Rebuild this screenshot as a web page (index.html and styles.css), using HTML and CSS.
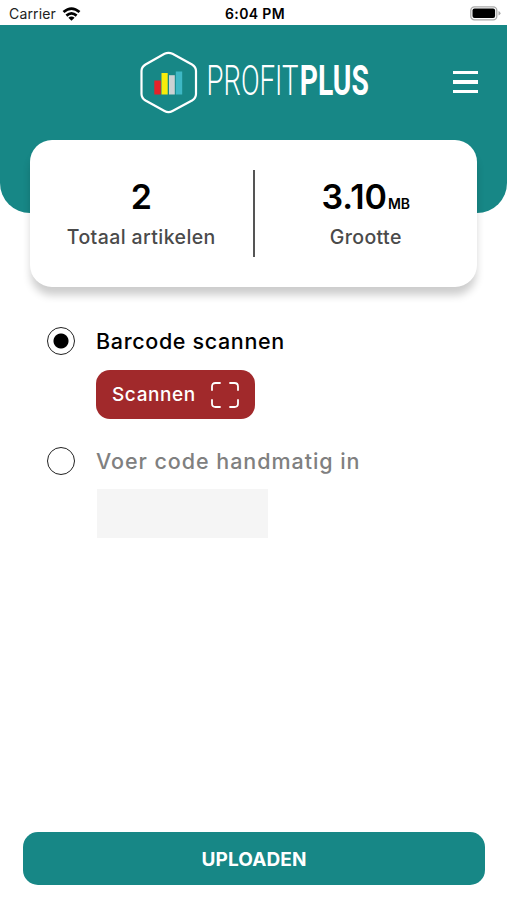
FILE: index.html
```html
<!DOCTYPE html>
<html lang="nl">
<head>
<meta charset="utf-8">
<title>ProfitPlus</title>
<link rel="stylesheet" href="styles.css">
</head>
<body>
<div class="status">
  <div class="carrier"><span>Carrier</span>
    <svg width="19" height="14" viewBox="0 0 18 14" fill="none" stroke="#000" stroke-width="2.7"><path d="M1 5.1Q9-1.9 17 5.1M3.9 8.6Q9 4.3 14.1 8.6"/><path d="M9 13.8L5.9 10.8Q9 8.4 12.1 10.8Z" fill="#000" stroke="none"/></svg>
  </div>
  <div class="time">6:04 PM</div>
  <svg class="battery" width="31" height="15" viewBox="0 0 31 15"><rect x=".8" y=".8" width="26" height="13" rx="3.6" fill="#fff" stroke="#aaa" stroke-width="1.3"/><rect x="2.5" y="2.6" width="22.6" height="9.4" rx="2"/><path d="M28.5 5q2 .8 2 2.3t-2 2.3z" fill="#aaa"/></svg>
</div>
<header class="header">
  <svg class="logo" width="236" height="66" viewBox="0 0 236 66">
    <path d="M25.500 3.800Q29.500 1.800 33.500 3.800L53 14.500Q57 17 57 21V44Q57 48 53 50.500L33.500 61Q29.500 63.200 25.500 61L6.500 50.500Q2.500 48 2.500 44V21Q2.500 17 6.500 14.500Z" fill="none" stroke="#fff" stroke-width="2.200"/>
    <path d="M15.300 30.500h6.500V44.500h-6.500z" fill="#e52229"/><path d="M22.500 23h6.200v21.500h-6.200z" fill="#f8ed0a"/><path d="M30 25.200h5.800V44.500H30z" fill="#ccd2d3"/><path d="M36.800 21.500h6.400v23h-6.400z" fill="#3eb8c5"/>
    <text class="logo-thin" x="67.500" y="45.300" textLength="92" lengthAdjust="spacingAndGlyphs">PROFIT</text>
    <text class="logo-bold" x="160.800" y="45.300" textLength="69" lengthAdjust="spacingAndGlyphs">PLUS</text>
  </svg>
  <div class="menu"><i></i><i></i><i></i></div>
</header>
<section class="card">
  <div class="stat"><div class="value">2</div><div class="label">Totaal artikelen</div></div>
  <div class="divider"></div>
  <div class="stat"><div class="value">3.10<small>MB</small></div><div class="label">Grootte</div></div>
</section>
<main class="options">
  <div class="option"><span class="radio on"></span><span class="name">Barcode scannen</span></div>
  <div class="scan"><span>Scannen</span>
    <svg width="28" height="26" viewBox="0 0 28 26" fill="none" stroke="#fff" stroke-width="1.800" stroke-linecap="round"><path d="M1 8V4.500Q1 1 4.500 1H9M19 1h4.500Q27 1 27 4.500V8M27 18v3.500q0 3.500-3.500 3.500H19M9 25H4.500Q1 25 1 21.500V18"/></svg>
  </div>
  <div class="option second"><span class="radio"></span><span class="name muted">Voer code handmatig in</span></div>
  <div class="field"></div>
</main>
<footer class="upload">UPLOADEN</footer>
</body>
</html>
```
FILE: styles.css
```css
* { box-sizing: border-box; }
body {
  margin: 0;
  width: 507px;
  height: 900px;
  display: flex;
  flex-direction: column;
  background: #fff;
  color: #000;
  font-family: Inter, "Liberation Sans", sans-serif;
  overflow: hidden;
}
svg { display: block; }
.status {
  height: 25px;
  flex: none;
  display: grid;
  grid-template-columns: 1fr auto 1fr;
  align-items: center;
  padding: 2px 6px 0 9px;
  font-size: 14px;
}
.carrier { display: flex; gap: 6px; align-items: center; color: #222; letter-spacing: 0.15px; }
.time { font-weight: 600; letter-spacing: 0.35px; }
.battery { justify-self: end; }
.header {
  height: 188px;
  flex: none;
  display: flex;
  align-items: flex-start;
  justify-content: space-between;
  padding: 25px 29px 0 139px;
  background: #178786;
  border-radius: 0 0 30px 30px;
}
.logo { overflow: visible; }
.logo text { fill: #fff; font-family: Roboto, sans-serif; font-size: 42px; }
.logo .logo-thin { font-weight: 300; }
.logo .logo-bold { font-weight: 700; }
.menu { width: 25px; margin-top: 21px; display: grid; gap: 6px; }
.menu i { height: 3.300px; background: #fff; }
.card {
  height: 147px;
  flex: none;
  margin: -73px 30px 0;
  display: flex;
  align-items: flex-start;
  padding-top: 30px;
  background: #fff;
  border-radius: 22px;
  box-shadow: 0 9px 9px -1px rgba(0, 0, 0, 0.2);
}
.stat { flex: 1; text-align: center; padding-top: 7px; }
.value { height: 40px; font-size: 34px; line-height: 40px; font-weight: 600; }
.value small { font-size: 14px; font-weight: 600; line-height: 1; margin-left: 1px; }
.label { margin-top: 9px; font-size: 19.500px; line-height: 22px; font-weight: 500; color: #4a4a4a; letter-spacing: 0.4px; }
.divider { width: 2px; height: 87px; background: #555; }
.options { padding: 40px 47px 0; }
.option { display: flex; align-items: center; gap: 21px; height: 28px; }
.radio { width: 28px; height: 28px; border: 1.500px solid #222; border-radius: 50%; }
.radio.on { background: radial-gradient(circle, #000 7px, #fff 8px); }
.name { font-size: 21.500px; font-weight: 500; letter-spacing: 0.650px; white-space: nowrap; }
.muted { color: #808080; letter-spacing: 0.950px; }
.scan {
  width: 159px;
  height: 49px;
  margin: 15px 0 0 49px;
  padding: 0 16px 0 16px;
  display: flex;
  align-items: center;
  justify-content: space-between;
  border-radius: 14px;
  background: #a1292b;
  color: #fff;
  font-size: 19px;
  font-weight: 500;
  letter-spacing: 0.6px;
}
.second { margin-top: 28px; }
.field { width: 171px; height: 49px; margin: 14px 0 0 50px; background: #f5f5f5; }
.upload {
  height: 53px;
  margin: auto 22px 15px 23px;
  padding-top: 1px;
  display: flex;
  align-items: center;
  justify-content: center;
  border-radius: 15px;
  background: #178786;
  color: #fff;
  font-size: 19px;
  font-weight: 700;
  letter-spacing: 0.1px;
}
```
